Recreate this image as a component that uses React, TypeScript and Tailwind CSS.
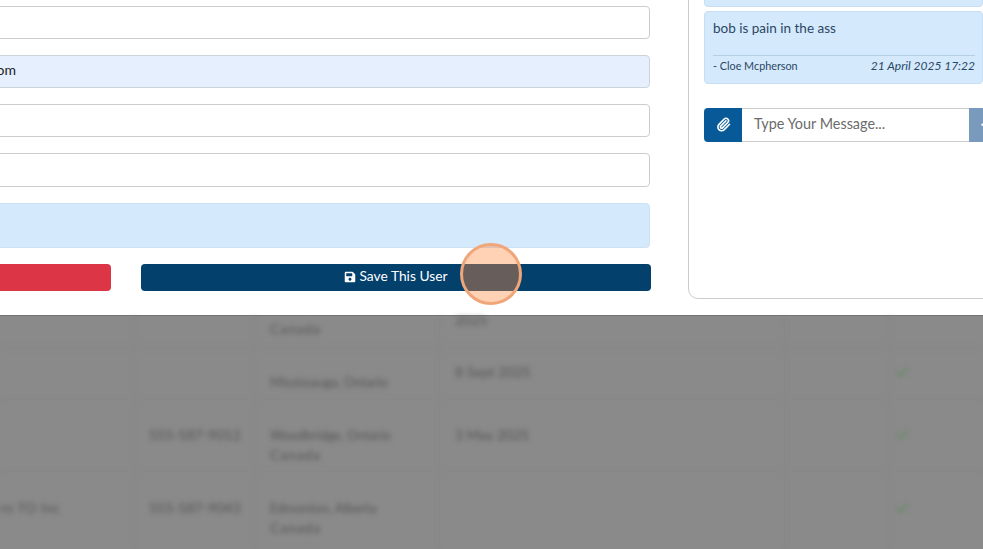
import { FaSave, FaCheck, FaPaperPlane } from "react-icons/fa";
import { Paperclip } from "lucide-react";

const font = { fontFamily: '"Lato", "Liberation Sans", sans-serif' };

function Cell({ className, children }: { className: string; children?: React.ReactNode }) {
  return <div className={"border-r border-[#858585] " + className}>{children}</div>;
}

function Row({ height, company, phone, city, cityTop, date, dateTop, check, checkTop }: {
  height: string; company?: string; phone?: string; city: string[]; cityTop: string; date?: string; dateTop: string; check?: boolean; checkTop?: string;
}) {
  return (
    <div className={"grid grid-cols-[135px_120px_185px_345px_105px_93px] border-b border-[#848484] shrink-0 " + height}>
      <Cell className={"tracking-[0.4px] " + cityTop}>{company}</Cell>
      <Cell className={"pl-[14px] " + cityTop}>{phone}</Cell>
      <Cell className={"pl-[15px] " + cityTop}>
        {city[0] && <div className="text-[13px]">{city[0]}</div>}
        {city[1] && <div className="mt-[4px] tracking-[0.8px]">{city[1]}</div>}
      </Cell>
      <Cell className={"pl-[15px] " + dateTop}>{date}</Cell>
      <Cell className="" />
      <div className={"pl-[5px] text-[#6f8a6f] " + (checkTop ?? "")}>{check && <FaCheck className="mt-[1px] h-[14px] w-[14px]" />}</div>
    </div>
  );
}

export default function App() {
  return (
    <div className="relative flex h-[549px] w-[983px] flex-col overflow-hidden bg-[#8a8a8a]" style={font}>
      <div className="flex h-[316px] shrink-0 overflow-hidden border-b border-[#737373] bg-white">
        <div className="ml-[-148px] flex w-[798px] shrink-0 flex-col pt-[6px]">
          <input readOnly defaultValue="" className="h-[33px] rounded-[4px] border border-[#cccccc] bg-white px-3" />
          <input readOnly defaultValue="cloe.mcpherson@mail.com" className="mt-[16px] h-[33px] rounded-[4px] border border-[#cdd3da] bg-[#e5effd] pb-[5px] text-[14px] text-[#222222]" />
          <input readOnly defaultValue="" className="mt-[16px] h-[33px] rounded-[4px] border border-[#cccccc] bg-white px-3" />
          <input readOnly defaultValue="" className="mt-[16px] h-[34px] rounded-[4px] border border-[#cccccc] bg-white px-3" />
          <div className="mt-[16px] h-[45px] rounded-[4px] border border-[#cfe2f3] bg-[#d4e9fc]" />
          <div className="mt-[16px] flex h-[27px] gap-[30px]">
            <button className="w-[259px] shrink-0 rounded-[4px] bg-[#dc3545]" />
            <button className="flex w-[510px] shrink-0 items-center justify-center gap-[3px] rounded-[4px] bg-[#03406c] pb-[3px] text-[13.8px] text-white">
              <FaSave className="mt-[2px] h-[12px] w-[12px]" />
              <span>Save This User</span>
            </button>
          </div>
        </div>
        <div className="ml-[38px] flex h-[339px] w-[320px] shrink-0 -translate-y-[40px] flex-col rounded-[10px] border border-[#cccccc] bg-white pl-[15px]">
          <div className="h-[45.5px] w-[279px] shrink-0 rounded-[4px] border border-[#c8def2] bg-[#d4e9fc]" />
          <div className="mt-[4.5px] h-[73px] w-[279px] shrink-0 rounded-[4px] border border-[#c8def2] bg-[#d4e9fc] pl-[8px] pr-[7px] pt-[6px] text-[#2a4763]">
            <div className="h-[26px] text-[13.5px] leading-[20px]">bob is pain in the ass</div>
            <div className="mt-[11px] flex h-[22px] items-center justify-between border-t border-[#b5cfe4] pb-[1px] text-[10.8px]">
              <span>- Cloe Mcpherson</span>
              <span className="text-[12px] italic">21 April 2025 17:22</span>
            </div>
          </div>
          <div className="mt-[24px] flex h-[34px] w-[305px] shrink-0">
            <div className="flex w-[38px] shrink-0 items-center justify-center rounded-l-[4px] bg-[#075a97] text-white">
              <Paperclip className="mb-[2px] h-[15px] w-[15px]" strokeWidth={2.6} />
            </div>
            <div className="flex w-[227px] shrink-0 items-center border-y border-[#cccccc] pb-[2px] pl-[12px] text-[14.4px] text-[#6b6b6b]">Type Your Message...</div>
            <div className="flex w-[40px] shrink-0 items-center bg-[#7a9abd] pb-[2px] pl-[12px] text-white">
              <FaPaperPlane className="h-[12px] w-[12px]" />
            </div>
          </div>
        </div>
      </div>
      <div className="flex min-h-0 flex-1 flex-col overflow-hidden text-[14px] leading-[16px] text-[#555555] blur-[2.4px]">
        <Row height="h-[32px]" city={["", "Canada"]} cityTop="pt-[1px]" date="2025" dateTop="-mt-[4px]" />
        <Row height="h-[52px]" city={["Mississauga, Ontario"]} cityTop="pt-[26px]" date="8 Sept 2025" dateTop="pt-[16px]" check checkTop="pt-[16px]" />
        <Row height="h-[72px]" phone="555-587-9012" city={["Woodbridge, Ontario", "Canada"]} cityTop="pt-[27px]" date="3 May 2025" dateTop="pt-[27px]" check checkTop="pt-[27px]" />
        <Row height="h-[90px]" company="ro TO Inc" phone="555-587-9043" city={["Edmonton, Alberta", "Canada"]} cityTop="pt-[28px]" dateTop="pt-[28px]" check checkTop="pt-[28px]" />
      </div>
      <div className="absolute left-[460px] top-[243px] h-[62px] w-[62px] rounded-full border-[3px] border-[#f0a679] bg-[#ff8c46]/40" />
    </div>
  );
}
